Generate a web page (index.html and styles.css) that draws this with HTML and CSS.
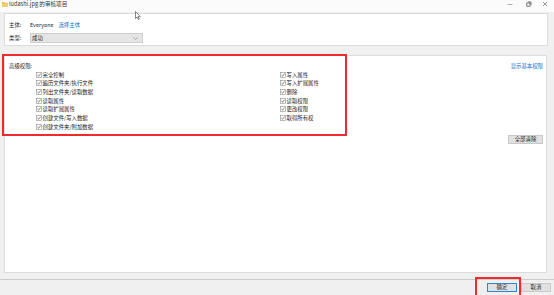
FILE: index.html
```html
<!DOCTYPE html>
<html lang="zh">
<head>
<meta charset="utf-8">
<title>ludashi.jpg 的审核项目</title>
<link rel="stylesheet" href="styles.css">
</head>
<body>
<svg width="0" height="0" class="defs">
  <symbol id="cb" viewBox="0 0 6 6"><rect x="0.5" y="0.5" width="5" height="5" fill="#fff" stroke="#8a8a8a" stroke-width="0.6"/><path d="M1.4 3l1.2 1.2 2-2.6" fill="none" stroke="#3a3a3a" stroke-width="0.65"/></symbol>
</svg>
<div class="window">
  <div class="titlebar">
    <svg class="folder" width="6" height="6" viewBox="0 0 6 6"><path d="M0 1h2.2l.6.7H6V6H0z" fill="#e8b84a"/><path d="M0 2.4h6V6H0z" fill="#f4cf62"/></svg>
    <span class="title">ludashi.jpg 的审核项目</span>
    <div class="controls">
      <svg width="6" height="6" viewBox="0 0 6 6"><path d="M0.5 3.5h5" stroke="#777" stroke-width="0.6"/></svg>
      <svg width="6" height="6" viewBox="0 0 6 6"><path d="M1.8 1h3.2v3.2" fill="none" stroke="#444" stroke-width="0.7"/><rect x="0.8" y="2" width="3.2" height="3.2" fill="none" stroke="#444" stroke-width="0.7"/></svg>
      <svg width="6" height="6" viewBox="0 0 6 6"><path d="M1 1l4 4M5 1l-4 4" stroke="#555" stroke-width="0.6"/></svg>
    </div>
  </div>
  <div class="main">
    <div class="panel principal">
      <div class="prow">
        <span class="label">主体:</span>
        <span class="value">Everyone</span>
        <span class="link">选择主体</span>
      </div>
      <div class="prow">
        <span class="label">类型:</span>
        <div class="select">
          <span>成功</span>
          <svg width="5" height="3" viewBox="0 0 5 3"><path d="M0.5 0.5l2 2 2-2" fill="none" stroke="#777" stroke-width="0.6"/></svg>
        </div>
      </div>
    </div>
    <div class="panel perms">
      <div class="perm-head">
        <span>高级权限:</span>
        <span class="link">显示基本权限</span>
      </div>
      <div class="perm-grid">
        <ul class="col">
          <li><svg class="cb"><use href="#cb"/></svg>完全控制</li>
          <li><svg class="cb"><use href="#cb"/></svg>遍历文件夹/执行文件</li>
          <li><svg class="cb"><use href="#cb"/></svg>列出文件夹/读取数据</li>
          <li><svg class="cb"><use href="#cb"/></svg>读取属性</li>
          <li><svg class="cb"><use href="#cb"/></svg>读取扩展属性</li>
          <li><svg class="cb"><use href="#cb"/></svg>创建文件/写入数据</li>
          <li><svg class="cb"><use href="#cb"/></svg>创建文件夹/附加数据</li>
        </ul>
        <ul class="col">
          <li><svg class="cb"><use href="#cb"/></svg>写入属性</li>
          <li><svg class="cb"><use href="#cb"/></svg>写入扩展属性</li>
          <li><svg class="cb"><use href="#cb"/></svg>删除</li>
          <li><svg class="cb"><use href="#cb"/></svg>读取权限</li>
          <li><svg class="cb"><use href="#cb"/></svg>更改权限</li>
          <li><svg class="cb"><use href="#cb"/></svg>取得所有权</li>
        </ul>
      </div>
      <div class="clear-row"><button class="btn">全部清除</button></div>
    </div>
  </div>
  <div class="footer">
    <button class="btn primary">确定</button>
    <button class="btn">取消</button>
  </div>
  <div class="mark mark-perms"></div>
  <div class="mark mark-ok"></div>
  <svg class="cursor" width="6" height="9" viewBox="0 0 6 9"><path d="M0.5 0.5v7l1.6-1.5 1.2 2.6 1-.5-1.2-2.5H5.3z" fill="#fff" stroke="#333" stroke-width="0.6"/></svg>
</div>
</body>
</html>
```
FILE: styles.css
```css
* { box-sizing: border-box; }
html, body { margin: 0; padding: 0; }
body {
  width: 554px;
  height: 295px;
  overflow: hidden;
  background: #f0f0f0;
  font-family: "Noto Sans CJK SC", "Noto Sans", sans-serif;
  font-size: 5.4px;
  color: #222;
}
.defs { position: absolute; width: 0; height: 0; }
.window {
  position: relative;
  width: 554px;
  height: 295px;
  display: flex;
  flex-direction: column;
}
.titlebar {
  height: 12px;
  background: #fbfbfb;
  display: flex;
  align-items: center;
  padding: 0 6px 4px 2px;
}
.folder { margin-right: 1px; }
.title { color: #333; line-height: 8px; font-size: 5.6px; }
.controls {
  margin-left: auto;
  display: flex;
  gap: 10px;
  align-items: center;
}
.controls svg:first-child { margin-right: 3px; }
.main {
  padding: 1px 6px 0 4px;
  display: flex;
  flex-direction: column;
}
.panel {
  background: #fff;
  border: 1px solid #dcdcdc;
}
.principal {
  height: 33px;
  padding: 6px 4px 0;
  display: flex;
  flex-direction: column;
  gap: 3px;
}
.prow {
  display: flex;
  align-items: center;
  height: 10px;
  line-height: 8px;
}
.label { width: 21px; }
.value { margin-right: 5px; }
.link { color: #1a6fc9; }
.select {
  width: 113px;
  height: 10px;
  background: #e5e5e5;
  border: 1px solid #cfcfcf;
  display: flex;
  align-items: center;
  justify-content: space-between;
  padding: 0 4px 0 1px;
}
.perms {
  margin-top: 9px;
  height: 218px;
  margin-right: 1px;
  padding: 6px 3px 0 4px;
}
.perm-head {
  display: flex;
  justify-content: space-between;
  line-height: 8px;
}
.perm-grid {
  display: grid;
  grid-template-columns: 244px 1fr;
  padding-left: 27px;
  margin-top: 0.5px;
}
.col {
  list-style: none;
  margin: 0;
  padding: 0;
}
.col li {
  display: flex;
  align-items: center;
  height: 8.67px;
  line-height: 8px;
}
.cb {
  width: 6px;
  height: 6px;
  margin-right: 0.5px;
  flex: none;
}
.clear-row {
  display: flex;
  justify-content: flex-end;
  margin-top: 3.5px;
}
.btn {
  font: inherit;
  color: #222;
  height: 9px;
  width: 35px;
  padding: 0;
  line-height: 7px;
  background: #e1e1e1;
  border: 1px solid #c9c9c9;
}
.footer {
  margin-top: 6px;
  border-top: 1px solid #cccccc;
  display: flex;
  justify-content: flex-end;
  gap: 4px;
  padding: 3px 3px 0 0;
}
.footer .btn { width: 30px; }
.footer .primary { border-color: #2f86d8; }
.mark {
  position: absolute;
  border: 2px solid #ef2b2b;
}
.mark-perms { left: 2px; top: 54px; width: 345px; height: 82px; }
.mark-ok { left: 475px; top: 277px; width: 46px; height: 20px; }
.cursor { position: absolute; left: 135px; top: 11px; }
```
